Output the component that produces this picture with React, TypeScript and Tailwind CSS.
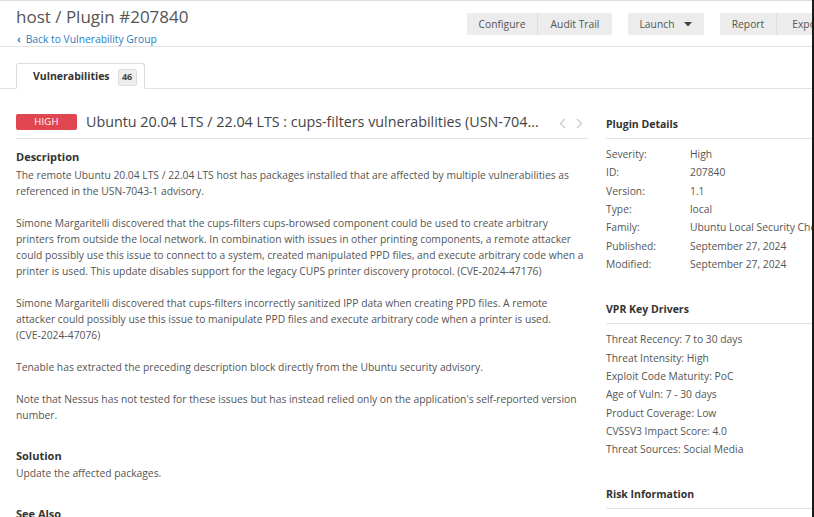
import React from "react";

const details: [string, string][] = [
  ["Severity:", "High"],
  ["ID:", "207840"],
  ["Version:", "1.1"],
  ["Type:", "local"],
  ["Family:", "Ubuntu Local Security Checks"],
  ["Published:", "September 27, 2024"],
  ["Modified:", "September 27, 2024"],
];

const drivers = [
  "Threat Recency: 7 to 30 days",
  "Threat Intensity: High",
  "Exploit Code Maturity: PoC",
  "Age of Vuln: 7 - 30 days",
  "Product Coverage: Low",
  "CVSSV3 Impact Score: 4.0",
  "Threat Sources: Social Media",
];

const paragraphs = [
  "The remote Ubuntu 20.04 LTS / 22.04 LTS host has packages installed that are affected by multiple vulnerabilities as referenced in the USN-7043-1 advisory.",
  "Simone Margaritelli discovered that the cups-filters cups-browsed component could be used to create arbitrary printers from outside the local network. In combination with issues in other printing components, a remote attacker could possibly use this issue to connect to a system, created manipulated PPD files, and execute arbitrary code when a printer is used. This update disables support for the legacy CUPS printer discovery protocol. (CVE\u20112024\u201147176)",
  "Simone Margaritelli discovered that cups-filters incorrectly sanitized IPP data when creating PPD files. A remote attacker could possibly use this issue to manipulate PPD files and execute arbitrary code when a printer is used. (CVE\u20112024\u201147076)",
  "Tenable has extracted the preceding description block directly from the Ubuntu security advisory.",
  "Note that Nessus has not tested for these issues but has instead relied only on the application's self-reported version number.",
];

const Btn = ({ children, className = "" }: { children: React.ReactNode; className?: string }) => (
  <button className={`h-[22px] bg-[#ececec] text-[10.3px] text-[#555] whitespace-nowrap shrink-0 ${className}`}>{children}</button>
);

const SideTitle = ({ children }: { children: React.ReactNode }) => (
  <div className="border-b border-[#e3e3e3] h-[31px] pt-[4px] flex items-center text-[10.5px] font-bold text-[#333]">
    {children}
  </div>
);

const Chevron = ({ dir }: { dir: "l" | "r" }) => (
  <svg width="7" height="11" viewBox="0 0 7 11">
    <path d={dir === "l" ? "M6 1L1.5 5.5 6 10" : "M1 1l4.5 4.5L1 10"} fill="none" stroke="#c9c9c9" strokeWidth="1.2" />
  </svg>
);

export default function App() {
  return (
    <div className="flex h-[517px] overflow-hidden bg-white" style={{ fontFamily: "'Open Sans', sans-serif" }}>
      <div className="w-[812px] shrink-0 overflow-hidden border-t border-[#dcdcdc]">
        <div className="w-[1000px]">
          {/* header */}
          <div className="flex justify-between border-b border-[#e3e3e3] h-[46px]">
            <div className="pl-4 pt-[4px]">
              <h1 className="text-[17px] leading-[23px] text-[#555] font-normal">host / Plugin #207840</h1>
              <a className="flex items-center gap-[5px] text-[10.3px] leading-[14px] text-[#2b7cc2] mt-[4px] pl-[1px]">
                <span className="text-[10px] font-bold">‹</span>
                Back to Vulnerability Group
              </a>
            </div>
            <div className="flex items-start pt-[12px] pr-[161px] gap-4">
              <div className="flex rounded-[2px] overflow-hidden">
                <Btn className="w-[71px] border-r border-[#dedede] pt-px">Configure</Btn>
                <Btn className="w-[74px] pt-px">Audit Trail</Btn>
              </div>
              <Btn className="w-[76px] rounded-[2px] flex items-center justify-center gap-[10px] pt-px">
                Launch
                <svg width="8" height="5" viewBox="0 0 8 5"><path d="M0 0h8L4 4.5z" fill="#444" /></svg>
              </Btn>
              <div className="flex rounded-[2px] overflow-hidden">
                <Btn className="w-[57px] border-r border-[#dedede] pt-px">Report</Btn>
                <Btn className="w-[62px] pt-px">Export</Btn>
              </div>
            </div>
          </div>

          {/* tabs */}
          <div className="flex items-end pt-[16px] border-b border-[#e3e3e3] pl-[16px]">
            <div className="-mb-px h-[26px] w-[129px] border border-b-white border-[#dcdcdc] rounded-t-[3px] bg-white flex items-center pl-[16px] pt-[2px] gap-[8px]">
              <span className="text-[10.5px] font-bold text-[#333]">Vulnerabilities</span>
              <span className="h-[17px] w-[19px] bg-[#eee] border border-[#ddd] rounded-[2px] text-[9px] font-bold text-[#444] flex items-center justify-center">46</span>
            </div>
          </div>

          <div className="flex pl-4 pt-[25px]">
            {/* left */}
            <div className="w-[572px] shrink-0">
              <div className="flex items-center h-[16px] mb-[8px]">
                <span className="w-[61px] h-[16px] shrink-0 bg-[#e0464f] rounded-[2px] text-white text-[9.5px] flex items-center justify-center tracking-wide">HIGH</span>
                <span className="ml-[9px] text-[14.3px] text-[#444] whitespace-nowrap">Ubuntu 20.04 LTS / 22.04 LTS : cups-filters vulnerabilities (USN-704...</span>
                <span className="ml-auto flex gap-[10px] pr-[5px] pt-[2px]">
                  <Chevron dir="l" />
                  <Chevron dir="r" />
                </span>
              </div>
              <div className="border-t border-[#e3e3e3] pt-[9px]">
                <h3 className="text-[11px] font-bold leading-[18px] text-[#333]">Description</h3>
                <div className="text-[10.3px] leading-[16px] text-[#555] flex flex-col gap-[16px] pt-px">
                  {paragraphs.map((p, i) => (
                    <p key={i}>{p}</p>
                  ))}
                </div>
                <h3 className="text-[11px] font-bold leading-[18px] text-[#333] mt-[24px]">Solution</h3>
                <p className="text-[10.3px] leading-[16px] text-[#555]">Update the affected packages.</p>
                <h3 className="text-[11px] font-bold leading-[18px] text-[#333] mt-[24px]">See Also</h3>
              </div>
            </div>

            {/* right */}
            <div className="ml-[18px] w-[260px] shrink-0 -mt-[6px]">
              <SideTitle>Plugin Details</SideTitle>
              <div className="pt-[6px] text-[10.3px] text-[#555]">
                {details.map(([k, v]) => (
                  <div key={k} className="flex leading-[18.33px]">
                    <span className="w-[84px]">{k}</span>
                    <span className="whitespace-nowrap">{v}</span>
                  </div>
                ))}
              </div>
              <div className="mt-[20px]">
                <SideTitle>VPR Key Drivers</SideTitle>
                <div className="pt-[6px] text-[10.3px] text-[#555]">
                  {drivers.map((d) => (
                    <div key={d} className="leading-[18.33px]">{d}</div>
                  ))}
                </div>
              </div>
              <div className="mt-[19px]">
                <SideTitle>Risk Information</SideTitle>
              </div>
            </div>
          </div>
        </div>
      </div>
      <div className="w-[2px] bg-[#1a1a1a] shrink-0" />
    </div>
  );
}
